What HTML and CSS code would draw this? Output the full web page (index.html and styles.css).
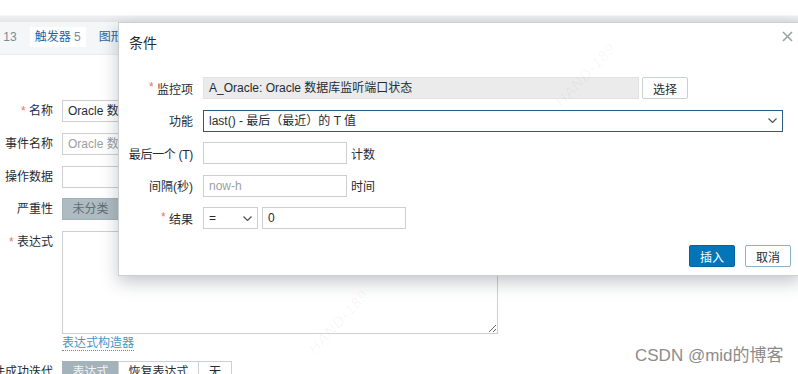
FILE: index.html
```html
<!DOCTYPE html>
<html lang="zh">
<head>
<meta charset="utf-8">
<title>条件</title>
<link rel="stylesheet" href="styles.css">
</head>
<body>
<div class="page">
  <div class="topband"></div>
  <div class="tabs">
    <span class="tab tab-first"><a class="tlink">监控项</a> <span class="count">13</span></span>
    <span class="tab tab-active"><a class="tlink">触发器</a> <span class="count">5</span></span>
    <span class="tab"><a class="tlink">图形</a> <span class="count">2</span></span>
  </div>
  <div class="form">
    <div class="row"><label class="lbl"><span class="req">*</span>&nbsp;名称</label><div class="field wide">Oracle 数据库监听端口状态</div></div>
    <div class="row"><label class="lbl">事件名称</label><div class="field wide ph">Oracle 数据库监听端口状态</div></div>
    <div class="row"><label class="lbl">操作数据</label><div class="field wide"></div></div>
    <div class="row"><label class="lbl">严重性</label>
      <div class="seg"><span class="seg-btn on sev">未分类</span><span class="seg-btn">信息</span><span class="seg-btn">警告</span></div>
    </div>
    <div class="row row-top"><label class="lbl"><span class="req">*</span>&nbsp;表达式</label><textarea class="expr"></textarea></div>
    <div class="row-link"><a class="builder">表达式构造器</a></div>
    <div class="row row-last"><label class="lbl">事件成功迭代</label>
      <div class="seg"><span class="seg-btn on">表达式</span><span class="seg-btn">恢复表达式</span><span class="seg-btn">无</span></div>
    </div>
  </div>
</div>

<div class="wm wm1">HAND-189</div>
<div class="wm wm2">HAND-189</div>

<div class="modal">
  <div class="modal-head">
    <h3 class="title">条件</h3>
    <span class="close"><svg width="11" height="11" viewBox="0 0 11 11"><path d="M1 1L10 10M10 1L1 10" stroke="#9aa3a8" stroke-width="1.6" fill="none"/></svg></span>
  </div>
  <div class="modal-body">
    <div class="mrow"><label class="mlbl"><span class="req">*</span>&nbsp;监控项</label><div class="field ro w-item">A_Oracle: Oracle 数据库监听端口状态</div><button class="btn btn-alt btn-sel">选择</button></div>
    <div class="mrow"><label class="mlbl">功能</label><div class="field sel focus w-func"><span>last() - 最后（最近）的 T 值</span><svg class="chev" width="9" height="5" viewBox="0 0 9 5"><path d="M0.5 0.5L4.5 4.5L8.5 0.5" stroke="#555" stroke-width="1.2" fill="none"/></svg></div></div>
    <div class="mrow"><label class="mlbl mlbl-tight">最后一个 (T)</label><div class="field w-small"></div><span class="unit">计数</span></div>
    <div class="mrow"><label class="mlbl">间隔(秒)</label><div class="field w-small ph">now-h</div><span class="unit">时间</span></div>
    <div class="mrow"><label class="mlbl"><span class="req">*</span>&nbsp;结果</label><div class="field sel w-op"><span>=</span><svg class="chev" width="9" height="5" viewBox="0 0 9 5"><path d="M0.5 0.5L4.5 4.5L8.5 0.5" stroke="#555" stroke-width="1.2" fill="none"/></svg></div><div class="field w-small">0</div></div>
  </div>
  <div class="modal-foot">
    <button class="btn btn-main">插入</button>
    <button class="btn btn-alt btn-cancel">取消</button>
  </div>
</div>

<div class="csdn">CSDN @mid的博客</div>
</body>
</html>
```

FILE: styles.css
```css
html, body {
  margin: 0;
  padding: 0;
}
body {
  width: 798px;
  height: 374px;
  overflow: hidden;
  position: relative;
  background: #ffffff;
  font-family: "Liberation Sans", Arial, "Noto Sans CJK SC", sans-serif;
  font-size: 12px;
  color: #1f2c33;
}

/* ---------- background page ---------- */
.topband {
  height: 22px;
  background: linear-gradient(to bottom, #ffffff 0, #ffffff 15px, #eef0f1 16px, #e3e6e7 22px);
}
.tabs {
  height: 33px;
  box-sizing: border-box;
  padding-top: 5px;
  background: #f4f6f7;
  border-bottom: 1px solid #ebeef0;
  display: flex;
  gap: 8px;
  white-space: nowrap;
}
.tab {
  height: 20px;
  line-height: 20px;
  padding: 0 5px;
}
.tab-first { margin-left: -41px; }
.tab-active { background: #ffffff; }
.tlink { color: #1f65a6; }
.tab-first .tlink { color: #768d99; }
.count { color: #768d99; }

.form {
  padding-top: 45px;
  display: flex;
  flex-direction: column;
  gap: 10.75px;
}
.row {
  display: flex;
  align-items: center;
  gap: 9px;
  height: 22px;
}
.row-top {
  align-items: flex-start;
  height: auto;
}
.lbl {
  width: 53px;
  flex: none;
  display: flex;
  justify-content: flex-end;
  line-height: 22px;
  white-space: nowrap;
}
.req { color: #e0766e; }

.field {
  box-sizing: border-box;
  height: 22px;
  line-height: 20px;
  border: 1px solid #cdd0d2;
  background: #ffffff;
  padding: 0 5px;
  white-space: nowrap;
  overflow: hidden;
  flex: none;
}
.wide { width: 436px; }
.ph { color: #9aa0a3; }

.seg {
  display: flex;
  height: 22px;
}
.seg-btn {
  box-sizing: border-box;
  height: 22px;
  line-height: 20px;
  padding: 0 10px;
  border: 1px solid #cdd0d2;
  margin-left: -1px;
  background: #fff;
  white-space: nowrap;
}
.seg-btn:first-child { margin-left: 0; }
.seg-btn.on {
  background: #a4b2b9;
  border-color: #a4b2b9;
  color: #f2f5f6;
  width: 57px;
  text-align: center;
  padding: 0;
}
.seg-btn.on.sev {
  color: #5f6d74;
  background: #aebbc1;
  border-color: #a3b1b8;
}
.row-last .seg-btn:nth-child(2) { width: 81px; text-align: center; padding: 0; }
.row-last .seg-btn:nth-child(3) { width: 34px; text-align: center; padding: 0; }

.expr {
  box-sizing: border-box;
  width: 436px;
  height: 103px;
  margin: 0;
  border: 1px solid #cdd0d2;
  resize: both;
  font: inherit;
  display: block;
}
.row-link {
  padding-left: 62px;
  margin-top: -9px;
  height: 14px;
  line-height: 14px;
}
.builder {
  color: #4796c4;
  border-bottom: 1px dotted #4796c4;
}

/* ---------- watermarks ---------- */
.wm {
  position: absolute;
  font-size: 15px;
  font-style: italic;
  color: rgba(0, 0, 0, 0.045);
  transform: rotate(-47deg);
  white-space: nowrap;
  letter-spacing: 1px;
}
.wm1 { left: 545px; top: 66px; z-index: 3; }
.wm2 { left: 298px; top: 313px; }

/* ---------- modal ---------- */
.modal {
  position: absolute;
  left: 118px;
  top: 22px;
  width: 683px;
  height: 254px;
  box-sizing: border-box;
  background: #ffffff;
  border: 1px solid #c9cfd2;
  box-shadow: 0 6px 16px rgba(40, 55, 65, 0.28);
  z-index: 2;
}
.modal-head {
  height: 41px;
  padding: 0 10px;
  display: flex;
  align-items: center;
}
.title {
  margin: 0;
  font-size: 14px;
  font-weight: normal;
  color: #1f2c33;
  line-height: 41px;
}
.close {
  position: absolute;
  right: 7px;
  top: 8px;
  width: 11px;
  height: 11px;
  display: block;
}
.close svg { display: block; }

.modal-body {
  padding: 13px 10px 0;
  display: flex;
  flex-direction: column;
  gap: 10.5px;
}
.mrow {
  display: flex;
  align-items: center;
  height: 22px;
}
.mlbl {
  width: 64px;
  flex: none;
  display: flex;
  justify-content: flex-end;
  margin-right: 10px;
  white-space: nowrap;
}
.mlbl-tight { letter-spacing: -0.3px; }
.ro {
  background: #ebebeb;
  border-color: #e2e2e2;
}
.w-item { width: 436px; }
.w-func { width: 580px; }
.w-small { width: 144px; }
.w-op { width: 55px; margin-right: 4px; }
.sel {
  display: flex;
  align-items: center;
  justify-content: space-between;
  padding: 0 5px 0 5px;
}
.focus { border-color: #2b5b80; }
.chev { display: block; flex: none; }
.unit { margin-left: 4px; }

.btn {
  box-sizing: border-box;
  height: 22px;
  font: inherit;
  font-size: 12px;
  padding: 0;
  border-radius: 2px;
  cursor: pointer;
}
.btn-alt {
  background: #ffffff;
  border: 1px solid #c8d1d6;
  color: #1f2c33;
}
.btn-sel { width: 46px; margin-left: 3px; }
.btn-main {
  width: 46px;
  background: #0275b8;
  border: 1px solid #02659f;
  color: #ffffff;
}
.btn-cancel {
  width: 46px;
  border-color: #8fb2c8;
}
.modal-foot {
  margin-top: 16px;
  padding-right: 9px;
  display: flex;
  justify-content: flex-end;
  gap: 10px;
}

/* ---------- CSDN watermark ---------- */
.csdn {
  position: absolute;
  left: 635px;
  top: 345px;
  font-size: 17px;
  line-height: 22px;
  color: #8c8c8c;
  white-space: nowrap;
  z-index: 4;
}
```
